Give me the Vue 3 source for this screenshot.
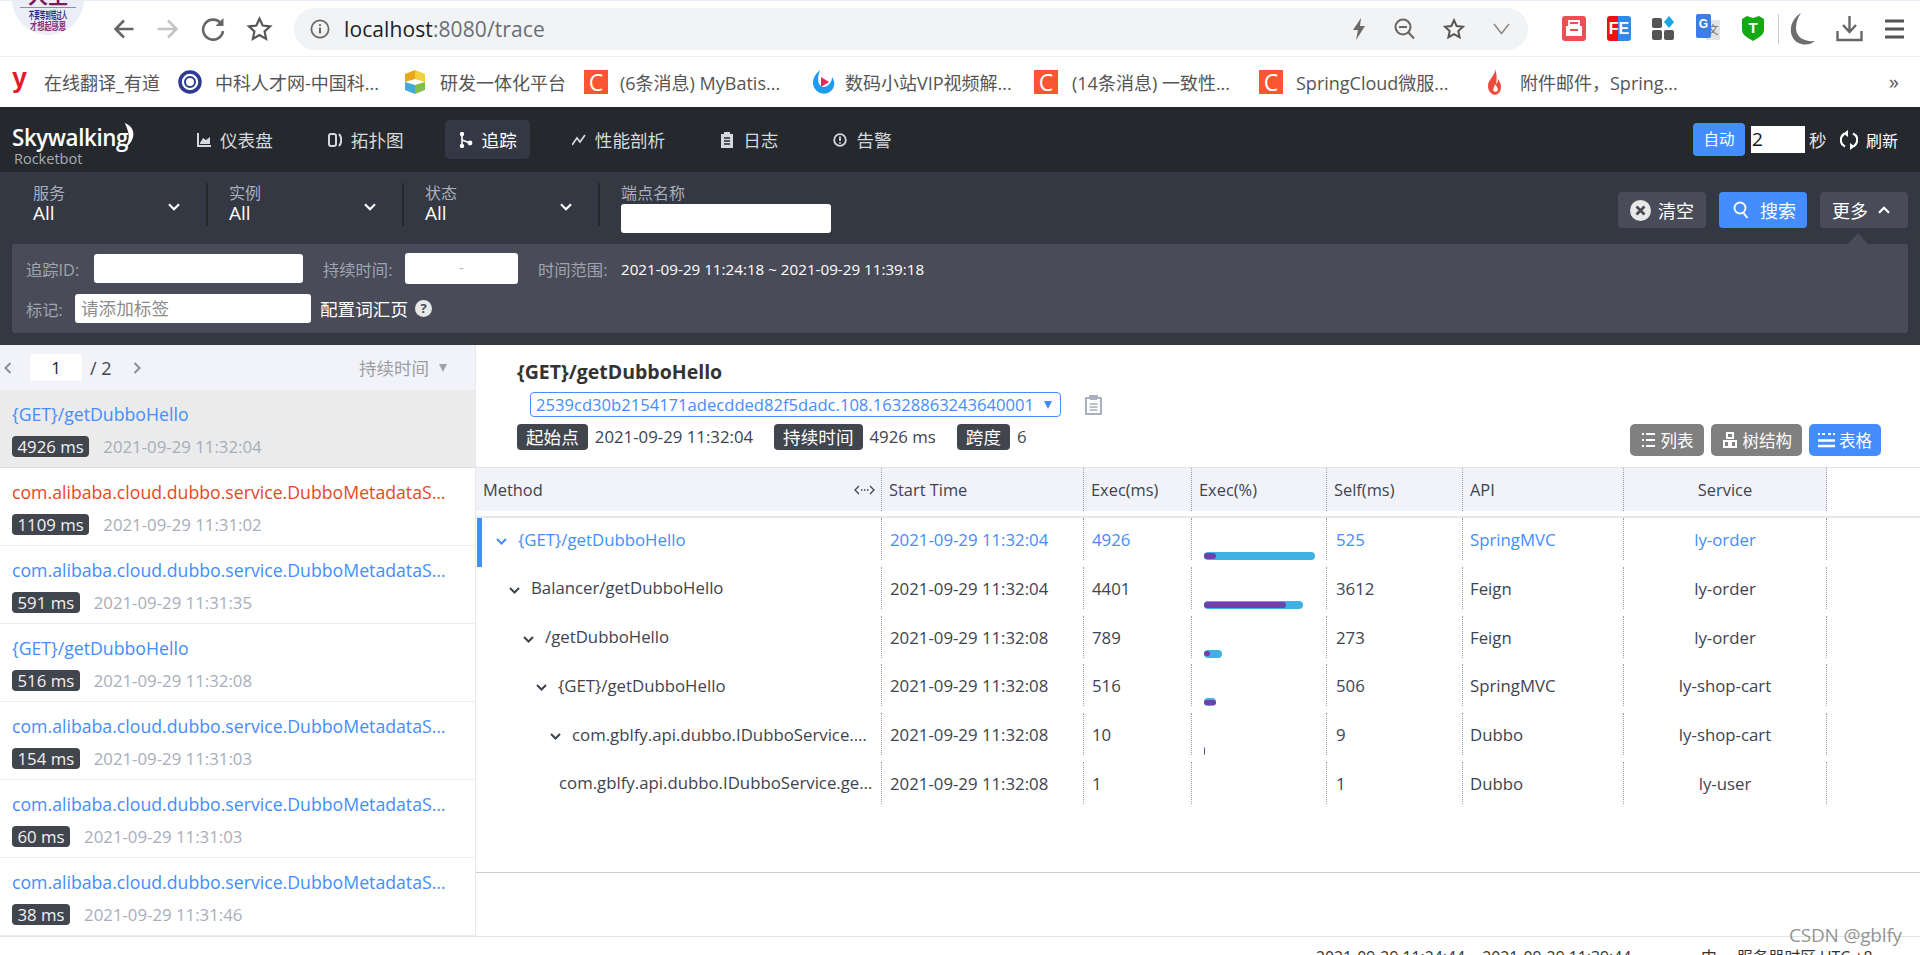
<script setup>
const bookmarks = [
  { kind: 'y', text: '在线翻译_有道', w: 166, gap: 16 },
  { kind: 'emblem', text: '中科人才网-中国科...', w: 225, gap: 13 },
  { kind: 'cube', text: '研发一体化平台', w: 181, gap: 13 },
  { kind: 'c', text: '(6条消息) MyBatis...', w: 227, gap: 12 },
  { kind: 'play', text: '数码小站VIP视频解...', w: 223, gap: 10 },
  { kind: 'c', text: '(14条消息) 一致性...', w: 225, gap: 14 },
  { kind: 'c', text: 'SpringCloud微服...', w: 228, gap: 13 },
  { kind: 'flame', text: '附件邮件，Spring...', w: 200, gap: 18 }
]
const navs = [
  { label: '仪表盘', icon: 'dash' },
  { label: '拓扑图', icon: 'topo' },
  { label: '追踪', icon: 'trace', active: true },
  { label: '性能剖析', icon: 'perf' },
  { label: '日志', icon: 'log' },
  { label: '告警', icon: 'alert' }
]
const filters = [
  { label: '服务', value: 'All' },
  { label: '实例', value: 'All' },
  { label: '状态', value: 'All' }
]
const longName = 'com.alibaba.cloud.dubbo.service.DubboMetadataService.getAllServiceKeys()'
const traces = [
  { name: '{GET}/getDubboHello', ms: '4926 ms', time: '2021-09-29 11:32:04', selected: true },
  { name: longName, ms: '1109 ms', time: '2021-09-29 11:31:02', error: true },
  { name: longName, ms: '591 ms', time: '2021-09-29 11:31:35' },
  { name: '{GET}/getDubboHello', ms: '516 ms', time: '2021-09-29 11:32:08' },
  { name: longName, ms: '154 ms', time: '2021-09-29 11:31:03' },
  { name: longName, ms: '60 ms', time: '2021-09-29 11:31:03' },
  { name: longName, ms: '38 ms', time: '2021-09-29 11:31:46' }
]
const columns = ['Start Time', 'Exec(ms)', 'Exec(%)', 'Self(ms)', 'API', 'Service']
const rows = [
  { method: '{GET}/getDubboHello', pad: 20, arrow: true, start: '2021-09-29 11:32:04', exec: '4926', self: '525', api: 'SpringMVC', service: 'ly-order', outer: 111, inner: 12, active: true },
  { method: 'Balancer/getDubboHello', pad: 33, arrow: true, start: '2021-09-29 11:32:04', exec: '4401', self: '3612', api: 'Feign', service: 'ly-order', outer: 99, inner: 82 },
  { method: '/getDubboHello', pad: 47, arrow: true, start: '2021-09-29 11:32:08', exec: '789', self: '273', api: 'Feign', service: 'ly-order', outer: 18, inner: 6 },
  { method: '{GET}/getDubboHello', pad: 60, arrow: true, start: '2021-09-29 11:32:08', exec: '516', self: '506', api: 'SpringMVC', service: 'ly-shop-cart', outer: 12, inner: 12 },
  { method: 'com.gblfy.api.dubbo.IDubboService.getHello(String)', pad: 74, arrow: true, start: '2021-09-29 11:32:08', exec: '10', self: '9', api: 'Dubbo', service: 'ly-shop-cart', outer: 1, inner: 1 },
  { method: 'com.gblfy.api.dubbo.IDubboService.getHello(String)', pad: 83, arrow: false, start: '2021-09-29 11:32:08', exec: '1', self: '1', api: 'Dubbo', service: 'ly-user', outer: 0, inner: 0 }
]
</script>

<template>
  <div class="page">
    <div class="avatar">
      <div class="avatar-top">人生</div>
      <div class="avatar-rule"></div>
      <div class="avatar-line">不要等到错过人</div>
      <div class="avatar-line alt">才想起感恩</div>
    </div>

    <header class="toolbar">
      <svg class="tb" width="22" height="24" viewBox="0 0 22 24"><path d="M20.5 12H3M11 3.5 2.5 12l8.5 8.5" fill="none" stroke="#666" stroke-width="2.6"/></svg>
      <svg class="tb" width="23" height="24" viewBox="0 0 23 24"><path d="M1.5 12H20M12 3.5l8.5 8.5-8.5 8.5" fill="none" stroke="#c4c4c4" stroke-width="2.6"/></svg>
      <svg class="tb" width="25" height="26" viewBox="0 0 25 26"><path d="M21 7.5A10 10 0 1 0 23 15" fill="none" stroke="#666" stroke-width="2.6"/><path d="M23.5 2v8h-8z" fill="#666"/></svg>
      <svg class="tb" width="27" height="26" viewBox="0 0 24 24"><path d="m12 2.5 2.9 6.3 6.9.8-5.1 4.7 1.4 6.8-6.1-3.5-6.1 3.5 1.4-6.8-5.1-4.7 6.9-.8z" fill="none" stroke="#555" stroke-width="2"/></svg>
      <div class="address">
        <svg width="20" height="20" viewBox="0 0 20 20"><circle cx="10" cy="10" r="8.6" fill="none" stroke="#666" stroke-width="1.7"/><path d="M10 8.6v6M10 5.2v1.9" stroke="#666" stroke-width="2"/></svg>
        <span class="url"><b>localhost</b><i>:8080/trace</i></span>
        <div class="addr-tools">
          <svg width="14" height="24" viewBox="0 0 14 24"><path d="M9 1 1 13h5l-2 10 9-14H8z" fill="#6a6a6a"/></svg>
          <svg width="21" height="22" viewBox="0 0 21 22"><circle cx="9" cy="9" r="7.5" fill="none" stroke="#666" stroke-width="2"/><path d="M5 9h8M14.5 14.5l5.5 6" stroke="#666" stroke-width="2"/></svg>
          <svg width="22" height="22" viewBox="0 0 24 24"><path d="m12 2.5 2.9 6.3 6.9.8-5.1 4.7 1.4 6.8-6.1-3.5-6.1 3.5 1.4-6.8-5.1-4.7 6.9-.8z" fill="none" stroke="#555" stroke-width="2.2"/></svg>
          <svg width="17" height="12" viewBox="0 0 17 12"><path d="m1 1 7.5 9.5L16 1" fill="none" stroke="#888" stroke-width="1.5"/></svg>
        </div>
      </div>
      <div class="exts">
        <svg width="24" height="25" viewBox="0 0 24 25"><rect width="24" height="25" rx="3" fill="#ee4f55"/><path d="M7 5h10v4H7z" fill="none" stroke="#fff" stroke-width="1.8"/><path d="M4 10h16v10H4z" fill="#fff"/><path d="M8 14h8" stroke="#ee4f55" stroke-width="2"/></svg>
        <div class="fe">FE</div>
        <svg width="23" height="25" viewBox="0 0 23 25"><rect y="2" width="10" height="10" rx="2" fill="#555"/><rect y="14" width="10" height="10" rx="2" fill="#555"/><rect x="12" y="14" width="10" height="10" rx="2" fill="#555"/><path d="m17 0 5 6-5 6-5-6z" fill="#15a7e8"/></svg>
        <div class="gt"><span class="gt-g">G</span><span class="gt-w">文</span></div>
        <div class="shield"><svg width="24" height="25" viewBox="0 0 24 25"><path d="M1 3 6 0l6 2 6-2 5 3v11c0 5-6 8-11 11C7 22 1 19 1 14z" fill="#13a913"/></svg><span>T</span></div>
        <div class="ext-sep"></div>
        <svg width="25" height="32" viewBox="0 0 25 32"><path d="M11 0C2 5-2 17 3 25c4 7 15 9 22 3-10 1-19-3-19-13C6 9 8 4 11 0z" fill="#6e6e6e"/></svg>
        <svg width="27" height="27" viewBox="0 0 27 27"><path d="M13.5 1v15M7 10l6.5 7L20 10" fill="none" stroke="#666" stroke-width="2.4"/><path d="M1.5 16v9h24v-9" fill="none" stroke="#666" stroke-width="2.4"/></svg>
        <svg width="21" height="22" viewBox="0 0 21 22"><path d="M1 3h19M1 11h19M1 19h19" stroke="#555" stroke-width="3"/></svg>
      </div>
    </header>

    <div class="bookmarks">
      <div v-for="b in bookmarks" :key="b.text" class="bm" :style="{ width: b.w + 'px', gap: b.gap + 'px' }">
        <span v-if="b.kind === 'y'" class="bm-y">y</span>
        <svg v-else-if="b.kind === 'emblem'" width="24" height="24" viewBox="0 0 24 24"><circle cx="12" cy="12" r="10" fill="#fff" stroke="#2b3a92" stroke-width="3.5"/><circle cx="12" cy="12" r="5" fill="none" stroke="#2b3a92" stroke-width="2"/></svg>
        <svg v-else-if="b.kind === 'cube'" width="24" height="26" viewBox="0 0 24 26"><path d="M12 1 2 5v8l10-3z" fill="#e9a71f"/><path d="m12 1 10 4v8l-10-3z" fill="#f2cf3c"/><path d="M2 13v8l10 4v-9z" fill="#45a9d8"/><path d="M22 13v8l-10 4v-9z" fill="#7fbf4a"/></svg>
        <span v-else-if="b.kind === 'c'" class="bm-c">C</span>
        <svg v-else-if="b.kind === 'play'" width="24" height="26" viewBox="0 0 24 26"><path d="M9 1C2 7 0 14 4 20c4 6 13 6 17 1 3-4 3-9 0-13 0 5-3 9-8 10C8 18 5 12 9 1z" fill="#1e9bf0"/><path d="m10 8 8 5-8 5z" fill="#f0245f"/></svg>
        <svg v-else width="15" height="26" viewBox="0 0 15 26"><path d="M8 0c1 6-7 10-7 17 0 5 3 8 7 9 4-1 6-4 6-8 0-3-1-5-3-8 0 3-1 4-2 5C10 10 10 5 8 0z" fill="#ec4b3c"/><path d="M7.500 15c1 2-2 4-1 7 1 1 3 1 4 0 1-3-1-5-3-7z" fill="#fff"/></svg>
        <span class="bm-text">{{ b.text }}</span>
      </div>
      <span class="bm-more">»</span>
    </div>

    <nav class="nav">
      <div class="logo">
        <div class="logo-main">Skywalking<svg class="logo-arc" width="13" height="24" viewBox="0 0 13 24"><path d="M3 0c7 2 10 8 9 13-1 5-4 9-8 11 3-5 4-10 3-14C6 6 5 3 3 0z" fill="#fff"/></svg></div>
        <div class="logo-sub">Rocketbot</div>
      </div>
      <div class="nav-items">
        <div v-for="n in navs" :key="n.label" class="nav-item" :class="{ active: n.active }">
          <svg width="14" height="16" viewBox="0 0 14 16" class="nav-ic">
            <path v-if="n.icon === 'dash'" d="M0 1h2v12h12v2H0zM3 11l3-5 3 2 4-3v7H3z" fill="#d5d8dc"/>
            <g v-else-if="n.icon === 'topo'" fill="none" stroke="#d5d8dc" stroke-width="2"><rect x="1" y="2" width="7" height="12" rx="2"/><path d="M11 2c3 3 3 9 0 12"/></g>
            <g v-else-if="n.icon === 'trace'" fill="none" stroke="#fff" stroke-width="1.6"><path d="M3 1v14M3 8l8 3"/><circle cx="3" cy="2" r="1.4" fill="#fff"/><circle cx="3" cy="14" r="1.4" fill="#fff"/><circle cx="11" cy="11" r="1.6" fill="#fff"/></g>
            <path v-else-if="n.icon === 'perf'" d="M0 13 5 6l3 4 5-7" fill="none" stroke="#d5d8dc" stroke-width="1.7"/>
            <g v-else-if="n.icon === 'log'"><path d="M1 2h3V0h6v2h3v14H1z" fill="#d5d8dc"/><path d="M4 6h6M4 9h6M4 12h6" stroke="#25292e" stroke-width="1.300"/></g>
            <g v-else><circle cx="7" cy="8" r="5.800" fill="none" stroke="#d5d8dc" stroke-width="1.800"/><path d="M7 4.500v4.500M7 10.200v1.600" stroke="#d5d8dc" stroke-width="1.800"/></g>
          </svg>
          <span>{{ n.label }}</span>
        </div>
      </div>
      <div class="refresh">
        <span class="auto">自动</span>
        <span class="sec-input">2</span>
        <span class="sec">秒</span>
        <svg width="18" height="20" viewBox="0 0 18 20"><path d="M4.500 3.500C-.5 7-.5 14 5 16.500M13.500 16.500C18.500 13 18.500 6 13 3.500" fill="none" stroke="#fff" stroke-width="2.200"/><path d="M8 0v7L3.500 3.500zM10 20v-7l4.500 3.500z" fill="#fff"/></svg>
        <span class="reload-text">刷新</span>
      </div>
    </nav>

    <section class="filters">
      <div class="filter-row">
        <div v-for="f in filters" :key="f.label" class="group">
          <div class="group-label">{{ f.label }}</div>
          <div class="group-value">{{ f.value }}</div>
          <svg class="chev" width="12" height="8" viewBox="0 0 12 8"><path d="m1 1.200 5 5 5-5" fill="none" stroke="#fff" stroke-width="2.200"/></svg>
        </div>
        <div class="endpoint">
          <div class="group-label">端点名称</div>
          <div class="endpoint-input"></div>
        </div>
        <div class="actions">
          <div class="btn dark">
            <svg width="21" height="21" viewBox="0 0 21 21"><circle cx="10.500" cy="10.500" r="10.500" fill="#e8e8e8"/><path d="m6.500 6.500 8 8M14.500 6.500l-8 8" stroke="#494c58" stroke-width="2.600"/></svg>
            <span>清空</span>
          </div>
          <div class="btn blue">
            <svg width="16" height="18" viewBox="0 0 16 18"><circle cx="7" cy="7" r="5.500" fill="none" stroke="#fff" stroke-width="1.800"/><path d="m10.500 12 4 5" stroke="#fff" stroke-width="2"/></svg>
            <span>搜索</span>
          </div>
          <div class="btn dark more">
            <span>更多</span>
            <svg width="12" height="8" viewBox="0 0 12 8"><path d="m1 6.800 5-5 5 5" fill="none" stroke="#fff" stroke-width="2.200"/></svg>
          </div>
        </div>
      </div>
      <div class="panel">
        <div class="arrow-up"></div>
        <div class="panel-row">
          <span class="plabel id-label">追踪ID:</span>
          <div class="pinput id-input"></div>
          <span class="plabel dur-label">持续时间:</span>
          <div class="pinput dur-input">-</div>
          <span class="plabel range-label">时间范围:</span>
          <span class="range">2021-09-29 11:24:18 ~ 2021-09-29 11:39:18</span>
        </div>
        <div class="panel-row second">
          <span class="plabel tag-label">标记:</span>
          <div class="pinput tag-input">请添加标签</div>
          <span class="vocab">配置词汇页</span>
          <span class="help">?</span>
        </div>
      </div>
    </section>

    <main class="content">
      <aside class="side">
        <div class="side-head">
          <svg class="pg-l" width="8" height="12" viewBox="0 0 8 12"><path d="M6.500 1 1.500 6l5 5" fill="none" stroke="#8a8f98" stroke-width="2"/></svg>
          <div class="pg-input">1</div>
          <span class="pg-total">/ 2</span>
          <svg class="pg-r" width="8" height="12" viewBox="0 0 8 12"><path d="m1.500 1 5 5-5 5" fill="none" stroke="#8a8f98" stroke-width="2"/></svg>
          <span class="sort">持续时间</span>
          <svg width="8" height="8" viewBox="0 0 8 8"><path d="M0 0h8L4 8z" fill="#a0a4aa"/></svg>
        </div>
        <div v-for="(t, i) in traces" :key="i" class="trace" :class="{ selected: t.selected }">
          <div class="trace-name" :class="{ err: t.error }">{{ t.name }}</div>
          <div class="trace-meta">
            <span class="ms">{{ t.ms }}</span>
            <span class="trace-time">{{ t.time }}</span>
          </div>
        </div>
      </aside>

      <section class="detail">
        <div class="detail-head">
          <div class="d-title">{GET}/getDubboHello</div>
          <div class="d-select-row">
            <div class="d-select">
              <span>2539cd30b2154171adecdded82f5dadc.108.16328863243640001</span>
              <svg width="8" height="8" viewBox="0 0 8 8"><path d="M0 0h8L4 8z" fill="#448dfe"/></svg>
            </div>
            <svg class="clip" width="17" height="20" viewBox="0 0 17 20"><path d="M1 3h4V1h7v2h4v16H1z" fill="#fff" stroke="#a9afbc" stroke-width="2" stroke-linejoin="round"/><path d="M5 2h7v3H5z" fill="#a9afbc"/><path d="M4.500 9h8M4.500 12h8M4.500 15h8" stroke="#a9afbc" stroke-width="1.300"/></svg>
          </div>
          <div class="d-meta">
            <span class="d-tag">起始点</span><span class="d-val">2021-09-29 11:32:04</span>
            <span class="d-tag gap">持续时间</span><span class="d-val">4926 ms</span>
            <span class="d-tag gap">跨度</span><span class="d-val">6</span>
            <div class="views">
              <div class="view">
                <svg width="13" height="16" viewBox="0 0 13 16"><path d="M0 2h2M4 2h9M0 8h2M4 8h9M0 14h2M4 14h9" stroke="#fff" stroke-width="2"/></svg>
                <span>列表</span>
              </div>
              <div class="view">
                <svg width="14" height="16" viewBox="0 0 14 16"><path d="M4 1h6v5H4zM1 9h5v6H1zM8 9h5v6H8z" fill="none" stroke="#fff" stroke-width="2"/></svg>
                <span>树结构</span>
              </div>
              <div class="view on">
                <svg width="17" height="16" viewBox="0 0 17 16"><path d="M0 2h2M4 2h3M10 2h3M15 2h2" stroke="#fff" stroke-width="2"/><path d="M0 8.500h17M0 14h17" stroke="#fff" stroke-width="2.600"/></svg>
                <span>表格</span>
              </div>
            </div>
          </div>
        </div>

        <div class="table">
          <div class="t-head">
            <div class="th th-method">
              <span>Method</span>
              <svg width="21" height="10" viewBox="0 0 21 10"><path d="M5 1 1 5l4 4M16 1l4 4-4 4" fill="none" stroke="#40454e" stroke-width="1.300"/><path d="M7 5h1.500M10 5h1.500M13 5h1.500" stroke="#40454e" stroke-width="1.500"/></svg>
            </div>
            <div v-for="c in columns" :key="c" class="th" :class="{ center: c === 'Service' }">{{ c }}</div>
          </div>
          <div class="t-rows">
            <div v-for="(r, i) in rows" :key="i" class="t-row" :class="{ 'row-active': r.active }">
              <div class="td td-method">
                <div class="method-in" :style="{ paddingLeft: r.pad + 'px' }">
                  <svg v-if="r.arrow" width="11" height="7" viewBox="0 0 11 7"><path d="m1 1 4.500 4.500L10 1" fill="none" stroke="currentColor" stroke-width="2"/></svg>
                  <span class="method-text">{{ r.method }}</span>
                </div>
              </div>
              <div class="td td-start">{{ r.start }}</div>
              <div class="td td-exec">{{ r.exec }}</div>
              <div class="td td-bar">
                <div v-if="r.outer" class="bar" :style="{ width: r.outer + 'px' }">
                  <div class="bar-in" :style="{ width: r.inner + 'px' }"></div>
                </div>
              </div>
              <div class="td td-self">{{ r.self }}</div>
              <div class="td td-api">{{ r.api }}</div>
              <div class="td td-svc">{{ r.service }}</div>
            </div>
          </div>
        </div>
        <div class="detail-foot"></div>
      </section>
    </main>

    <footer class="footer">
      <span class="f-range">2021-09-29 11:24:44 ~ 2021-09-29 11:39:44</span>
      <span class="f-lang">中</span>
      <span class="f-tz">服务器时区 UTC +8</span>
    </footer>

    <div class="watermark">CSDN @gblfy</div>
  </div>
</template>

<style scoped>
.page {
  position: relative;
  width: 1920px;
  height: 955px;
  overflow: hidden;
  display: flex;
  flex-direction: column;
  background: #fff;
  color: #3d444f;
  font-family: "Open Sans", "Noto Sans CJK SC", sans-serif;
  font-size: 16.8px;
}
.avatar {
  position: absolute;
  left: 12px;
  top: -37px;
  width: 72px;
  height: 72px;
  border-radius: 50%;
  background: #ebeef7;
  z-index: 2;
  text-align: center;
  overflow: hidden;
}
.avatar-top { margin-top: 24px; height: 19px; font-size: 20px; line-height: 19px; font-weight: 700; color: #7b1a5c; }
.avatar-rule { height: 1px; margin: 1px 8px 2px; background: #8a8fb0; }
.avatar-line { font-size: 10px; line-height: 11px; color: #2a2a88; font-weight: 700; white-space: nowrap; transform: scaleX(0.55); }
.avatar-line.alt { color: #8a2a80; transform: scaleX(0.72); }

.toolbar {
  height: 57px;
  box-sizing: border-box;
  border-top: 1px solid #e9ecf6;
  border-bottom: 1px solid #eef0f3;
  padding-left: 113px;
  display: flex;
  align-items: center;
  gap: 21px;
  flex: none;
}
.tb { flex: none; }
.address {
  width: 1234px;
  height: 42px;
  box-sizing: border-box;
  margin-top: 0;
  padding: 0 18px 0 16px;
  background: #f1f3f4;
  border-radius: 21px;
  display: flex;
  align-items: center;
  gap: 14px;
  flex: none;
}
.url { font-size: 21px; color: #202124; letter-spacing: 0.1px; }
.url b { font-weight: 400; }
.url i { font-style: normal; color: #6a6e73; }
.addr-tools { margin-left: auto; display: flex; align-items: center; gap: 28px; }
.exts { margin-left: 13px; display: flex; align-items: center; gap: 21px; }
.fe {
  width: 24px;
  height: 25px;
  border-radius: 3px;
  background: linear-gradient(90deg, #f01010 0 45%, #2f8ae8 45% 100%);
  color: #fff;
  font: 700 16px/25px "Liberation Sans", sans-serif;
  text-align: center;
}
.gt { position: relative; width: 24px; height: 30px; }
.gt-g {
  position: absolute;
  left: 0;
  top: 0;
  width: 15px;
  height: 24px;
  background: #3c7de6;
  color: #fff;
  font: 700 12px/20px "Liberation Sans", sans-serif;
  text-align: center;
  border-radius: 2px;
  z-index: 1;
}
.gt-w {
  position: absolute;
  left: 10px;
  top: 6px;
  width: 14px;
  height: 20px;
  background: #e3e3e3;
  color: #666;
  font-size: 11px;
  line-height: 20px;
  text-align: center;
}
.shield { position: relative; width: 24px; height: 25px; }
.shield span {
  position: absolute;
  inset: 0;
  color: #fff;
  font: 700 15px/24px "Liberation Sans", sans-serif;
  text-align: center;
}
.ext-sep { width: 1px; height: 30px; background: #ccc; margin: 0 -10px 0 -8px; }

.bookmarks {
  height: 50px;
  flex: none;
  display: flex;
  align-items: center;
  padding-left: 12px;
  position: relative;
}
.bm { display: flex; align-items: center; flex: none; }
.bm-text { font-size: 18px; color: #555; white-space: nowrap; }
.bm-y { width: 16px; color: #e8182c; font: 900 27px/24px "Liberation Sans", sans-serif; transform: translateY(-4px); }
.bm-c {
  width: 24px;
  height: 24px;
  background: #fc5531;
  color: #fff;
  font: 400 23px/24px "Open Sans", sans-serif;
  text-align: center;
}
.bm-more { position: absolute; left: 1889px; top: 11px; font-size: 20px; color: #555; }

.nav {
  height: 65px;
  flex: none;
  background: #25292e;
  display: flex;
  align-items: center;
  padding: 0 22px 0 12px;
  box-sizing: border-box;
  color: #d5d8dc;
}
.logo { width: 123px; flex: none; height: 50px; padding-top: 8px; box-sizing: border-box; }
.logo-main { position: relative; font-size: 23px; line-height: 28px; font-weight: 600; color: #fff; letter-spacing: -0.4px; white-space: nowrap; transform: scaleX(0.97); transform-origin: left; }
.logo-arc { position: absolute; left: 113px; top: 0; }
.logo-sub { margin-top: 0; padding-left: 2px; font-size: 14.500px; line-height: 16px; color: #a8adb4; }
.nav-items { margin-left: 48px; display: flex; gap: 28px; }
.nav-item {
  height: 39px;
  padding: 0 13px 0 14px;
  display: flex;
  align-items: center;
  gap: 9px;
  border-radius: 5px;
  font-size: 17.600px;
  white-space: nowrap;
}
.nav-item.active { background: #333844; color: #fff; }
.nav-ic { flex: none; }
.refresh { margin-left: auto; display: flex; align-items: center; }
.auto {
  width: 52px;
  height: 33px;
  border-radius: 4px;
  background: #448dfe;
  color: #fff;
  font-size: 15.500px;
  line-height: 33px;
  text-align: center;
}
.sec-input {
  width: 54px;
  height: 27px;
  margin-left: 6px;
  background: #fff;
  color: #111;
  font-size: 19px;
  line-height: 27px;
  padding-left: 1px;
  box-sizing: border-box;
}
.sec { margin-left: 4px; width: 31px; font-size: 17.500px; color: #e6e8ea; }
.reload-text { margin-left: 8px; font-size: 16px; color: #fff; }

.filters { height: 173px; flex: none; background: #333843; padding: 11px 12px 0; box-sizing: border-box; }
.filter-row { display: flex; align-items: flex-start; height: 50px; }
.group {
  position: relative;
  width: 196px;
  height: 43px;
  box-sizing: border-box;
  padding-left: 21px;
  border-right: 2px solid #25292e;
}
.group-label { font-size: 16px; line-height: 20px; color: #a8aeba; }
.group-value { font-size: 19px; line-height: 21px; color: #fff; }
.chev { position: absolute; right: 26px; top: 20px; }
.endpoint { padding-left: 21px; width: 210px; }
.endpoint-input { margin-top: 1px; width: 210px; height: 29px; background: #fff; border-radius: 3px; }
.actions { margin-left: auto; margin-top: 9px; display: flex; gap: 13px; }
.btn {
  width: 88px;
  height: 36px;
  box-sizing: border-box;
  border-radius: 4px;
  display: flex;
  align-items: center;
  justify-content: flex-start;
  padding-left: 12px;
  gap: 7px;
  color: #fff;
  font-size: 18px;
}
.btn.blue { padding-left: 14px; gap: 11px; }
.btn.more { gap: 10px; }
.btn.dark { background: #494c58; }
.btn.blue { background: #448dfe; }
.panel {
  position: relative;
  margin-top: 11px;
  height: 89px;
  box-sizing: border-box;
  padding: 9px 0 0 14px;
  background: #494c58;
  border-radius: 3px;
}
.arrow-up {
  position: absolute;
  right: 40px;
  top: -11px;
  width: 0;
  height: 0;
  border-left: 10.500px solid transparent;
  border-right: 10.500px solid transparent;
  border-bottom: 11px solid #494c58;
}
.panel-row { display: flex; align-items: center; height: 31px; }
.panel-row.second { margin-top: 10px; height: 29px; }
.plabel { color: #9ea3af; font-size: 16.300px; white-space: nowrap; }
.id-label { width: 68px; }
.pinput { background: #fff; border-radius: 3px; box-sizing: border-box; }
.id-input { width: 209px; height: 29px; }
.dur-label { margin-left: 20px; width: 82px; }
.dur-input { width: 113px; height: 31px; text-align: center; line-height: 30px; color: #a7aebb; font-size: 14px; }
.range-label { margin-left: 20px; width: 83px; }
.range { color: #fff; font-size: 15.200px; white-space: nowrap; }
.tag-label { width: 49px; }
.tag-input { width: 236px; height: 29px; padding-left: 6px; color: #8c8c8c; font-size: 17.600px; line-height: 28px; }
.vocab { margin-left: 9px; color: #fff; font-size: 17.600px; white-space: nowrap; }
.help {
  margin-left: 7px;
  width: 17px;
  height: 17px;
  border-radius: 50%;
  background: #e8e8e8;
  color: #494c58;
  font: 700 13px/17px "Open Sans", sans-serif;
  text-align: center;
}

.content { height: 591px; flex: none; display: flex; }
.side { width: 476px; flex: none; box-sizing: border-box; border-right: 1px solid #e6e8ec; }
.side-head {
  height: 45px;
  box-sizing: border-box;
  background: #f2f3f8;
  display: flex;
  align-items: center;
  padding-left: 4px;
}
.pg-input {
  margin-left: 18px;
  width: 52px;
  height: 27px;
  background: #fff;
  border-radius: 3px;
  text-align: center;
  line-height: 27px;
  color: #222;
  font-size: 16.800px;
}
.pg-total { margin-left: 8px; width: 25px; font-size: 18px; color: #3d444f; white-space: nowrap; }
.pg-r { margin-left: 18px; }
.sort { margin-left: 218px; margin-right: 10px; color: #9a9da3; font-size: 17.500px; white-space: nowrap; }
.trace {
  height: 78px;
  box-sizing: border-box;
  padding: 12px 20px 0 12px;
  border-bottom: 1.500px solid #ececee;
}
.trace.selected { background: #ebebeb; border-bottom-color: #dcdcdc; }
.trace-name {
  height: 24px;
  line-height: 24px;
  color: #448dfe;
  font-size: 17.700px;
  white-space: nowrap;
  overflow: hidden;
  text-overflow: ellipsis;
}
.trace-name.err { color: #e8481c; }
.trace-meta { margin-top: 9px; display: flex; align-items: center; }
.ms {
  height: 21px;
  padding: 0 5.500px;
  border-radius: 4px;
  background: #40454e;
  color: #f2f2f2;
  font-size: 16.800px;
  line-height: 21px;
}
.trace-time { margin-left: 14px; color: #a7aebb; font-size: 16.800px; white-space: nowrap; }

.detail { flex: 1; min-width: 0; display: flex; flex-direction: column; }
.detail-head { height: 122px; box-sizing: border-box; padding: 14px 39px 0 41px; }
.d-title { font-size: 19.500px; line-height: 25px; font-weight: 700; color: #333; }
.d-select-row { margin-top: 8px; padding-left: 13px; display: flex; align-items: center; }
.d-select {
  width: 531px;
  height: 25px;
  box-sizing: border-box;
  border: 1px solid #448dfe;
  border-radius: 4px;
  padding: 0 8px 0 5px;
  display: flex;
  align-items: center;
  justify-content: space-between;
  color: #448dfe;
  font-size: 16.600px;
  white-space: nowrap;
}
.clip { margin-left: 24px; }
.d-meta { margin-top: 7px; height: 32px; display: flex; align-items: flex-start; }
.d-tag {
  height: 26px;
  padding: 0 9px;
  border-radius: 4px;
  background: #40454e;
  color: #fff;
  font-size: 17.600px;
  line-height: 26px;
  white-space: nowrap;
}
.d-tag.gap { margin-left: 21px; }
.d-val { margin-left: 7px; line-height: 26px; color: #3d444f; font-size: 16.800px; white-space: nowrap; }
.views { margin-left: auto; display: flex; gap: 7px; }
.view {
  height: 32px;
  padding: 0 10px 0 12px;
  border-radius: 5px;
  background: #808080;
  color: #fff;
  font-size: 16.500px;
  display: flex;
  align-items: center;
  gap: 6px;
  white-space: nowrap;
}
.view.on { background: #448dfe; padding: 0 9px 0 9px; gap: 4px; }

.table { flex: 1; min-height: 0; border-bottom: 1px solid #cfcfcf; border-top: 1.500px solid #e2e3e8; }
.t-head {
  display: grid;
  grid-template-columns: 406px 202px 108px 135px 136px 161px 203px;
  width: 1351px;
  height: 43px;
  background: #f2f3f8;
}
.th {
  box-sizing: border-box;
  border-right: 1px dotted #9b9da3;
  padding-left: 7px;
  line-height: 43px;
  font-size: 16.400px;
  color: #3d444f;
  white-space: nowrap;
}
.th.center { padding-left: 0; text-align: center; }
.th-method { display: flex; align-items: center; justify-content: space-between; padding: 0 6px 0 7px; }
.t-rows { margin-top: 5px; border-top: 2px solid #e6e7ea; }
.t-row {
  position: relative;
  display: grid;
  grid-template-columns: 406px 202px 108px 135px 136px 161px 203px;
  width: 1351px;
  height: 48.800px;
  font-size: 16.800px;
}
.row-active { color: #448dfe; }
.row-active::before {
  content: "";
  position: absolute;
  left: 1px;
  top: 0;
  width: 5px;
  height: 49px;
  background: #448dfe;
}
.td {
  box-sizing: border-box;
  height: 42px;
  border-right: 1px dotted #9b9da3;
  padding-left: 8px;
  line-height: 43px;
  white-space: nowrap;
  overflow: hidden;
}
.td-method { padding-left: 0; padding-right: 6px; }
.method-in { display: flex; align-items: center; gap: 11px; height: 42px; }
.method-in svg { flex: none; margin-top: 5px; }
.method-text { overflow: hidden; text-overflow: ellipsis; white-space: nowrap; }
.td-bar { padding: 34px 0 0 12px; line-height: 0; overflow: visible; padding-top: 34px; }
.bar { height: 8px; border-radius: 4px; background: #3fb1e3; display: flex; align-items: center; }
.bar-in { height: 5.500px; border-radius: 3px; background: #6e40aa; }
.td-self { padding-left: 9px; }
.td-api { padding-left: 7px; }
.td-svc { padding-left: 0; text-align: center; }
.detail-foot { height: 63px; flex: none; }

.footer {
  flex: 1;
  display: flex;
  border-top: 1.500px solid #e4e4e4;
  box-sizing: border-box;
  padding-top: 8px;
  font-size: 15.800px;
  line-height: 24px;
  color: #333;
  white-space: nowrap;
}
.f-range { margin-left: 1316px; width: 385px; }
.f-lang { width: 36px; }
.watermark {
  position: absolute;
  left: 1789px;
  top: 922px;
  font-size: 19px;
  line-height: 26px;
  color: rgba(110, 110, 110, 0.75);
  white-space: nowrap;
  letter-spacing: -0.2px;
}
</style>

<style>
html, body { margin: 0; padding: 0; overflow: hidden; }
</style>
